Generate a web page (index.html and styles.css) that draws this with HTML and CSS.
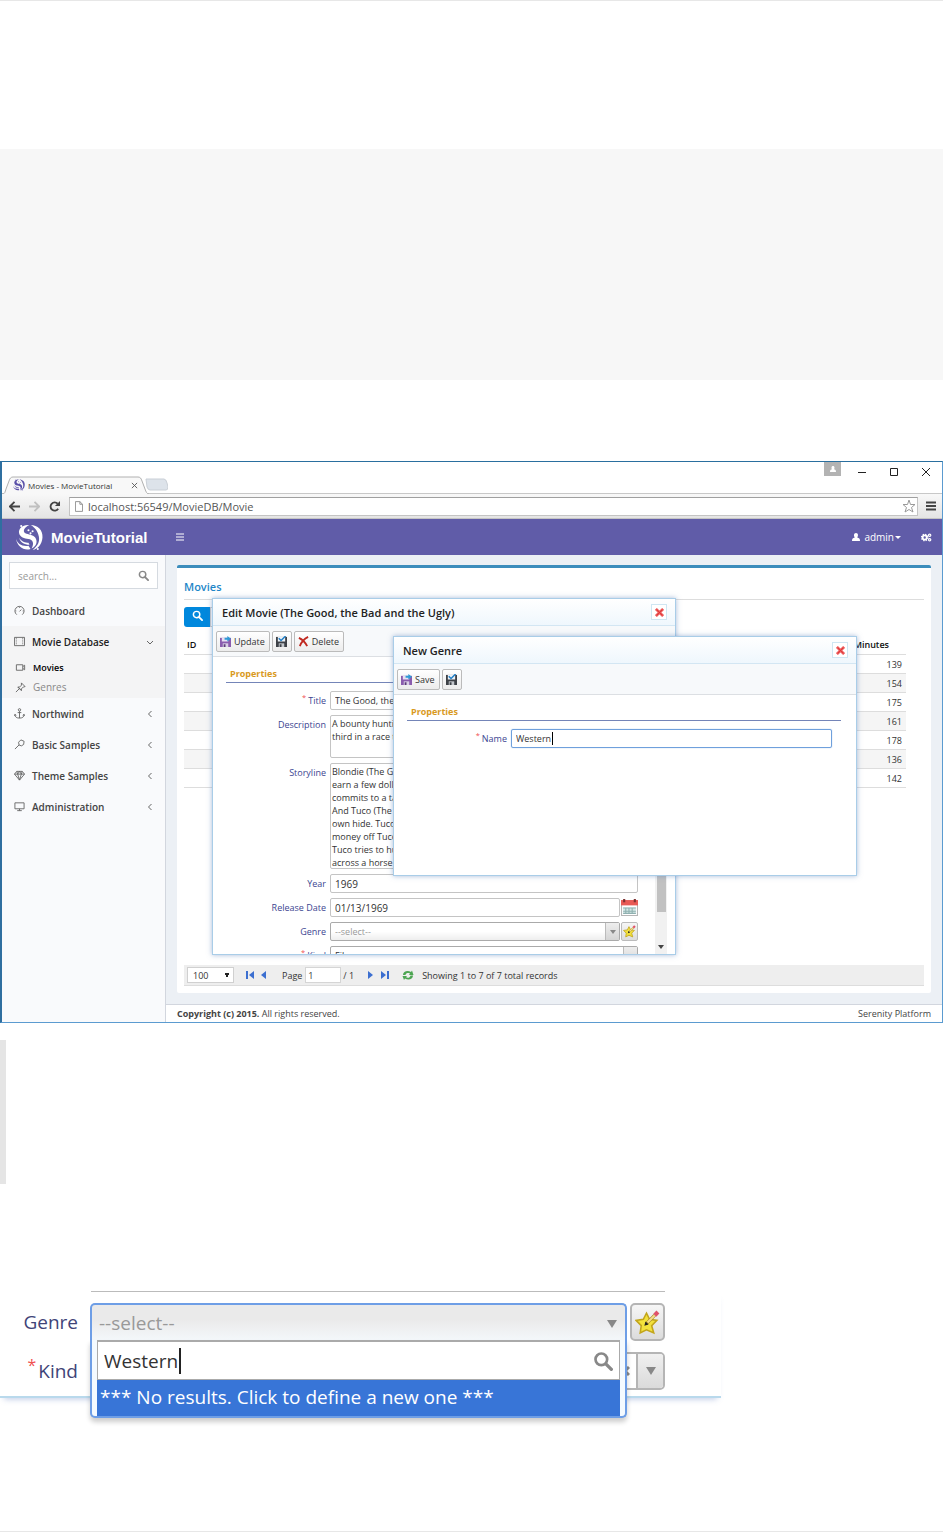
FILE: index.html
```
<!DOCTYPE html>
<html lang="en">

<head>
  <meta charset="UTF-8" />
  <meta name="viewport" content="width=device-width, initial-scale=1.0">
  <title>Movies - MovieTutorial</title>
  <link rel="stylesheet" href="styles.css">
</head>

<body>
  <!-- Shared icons -->
  <svg class="sprite" aria-hidden="true">
    <symbol id="swirl" viewBox="0 0 26 26">
      <path d="M13 1C7 0 2 4 3 9c1 4 5 5 9 5.500 4 .5 6 4 3 9 5-2 6-7 3.500-10.500C16 10 12 10.500 9 9 6 7 8 3 13 1z" />
      <path d="M14 1c7 0 12 5 11.500 12C25 20 21 24 16 25c5-4 7-8 6-13-1-5-4-9-8-11z" />
      <path d="M0 14c1 5 6 8 12 7l2 3C8 26 1 22 0 14z" />
      <path d="M3 13c2 4 6 5 9 5l1 2c-5 0-9-2-10-7z" />
      <circle cx="12" cy="6" r="1" />
      <circle cx="16" cy="7" r="1" />
      <circle cx="14" cy="9" r="1" />
      <circle cx="5" cy="2" r="1" />
      <circle cx="21" cy="24" r="1" />
    </symbol>
    <symbol id="disk-save" viewBox="0 0 12 12">
      <path fill="#8a5cae" d="M0 2h12v10H0z" />
      <path fill="#e6e0f2" d="M2 2h7v4H2z" />
      <path fill="#d9cfe6" d="M3 8h6v4H3z" />
      <path fill="#5b3c78" d="M4 9h2v3H4z" />
      <path fill="#2f9ad6" d="M5 2h3V0l4 3-4 3V4H5z" />
    </symbol>
    <symbol id="disk-check" viewBox="0 0 12 12">
      <path fill="#3d4147" d="M0 1h12v11H0z" />
      <path fill="#eef3f8" d="M2 1h8v5H2z" />
      <path fill="#c3c7cc" d="M3 8h6v4H3z" />
      <path fill="#3d4147" d="M4 9h2v3H4z" />
      <path fill="none" stroke="#2380c8" stroke-width="1.600" d="M3 2.500L5.500 5 10.500 0" />
    </symbol>
    <symbol id="red-x" viewBox="0 0 10 10">
      <path fill="none" stroke="#ee5a5a" stroke-width="3" d="M1 1l8 8M9 1L1 9" />
      <path fill="none" stroke="#d83a3a" stroke-width="1" d="M2 2l6 6M8 2L2 8" />
    </symbol>
    <symbol id="star" viewBox="0 0 24 24">
      <path fill="#f2e13c" stroke="#c2a51c" stroke-width="1.500" d="M11 3l3 6 7 1-5 5 2 7-7-3-6 3 1-7-5-5 7-1z" />
      <path fill="none" stroke="#a08820" stroke-width="3" d="M11 13l8-8" />
      <path fill="none" stroke="#f6dc8a" stroke-width="2" d="M12 12l7-7" />
      <path fill="none" stroke="#e0526a" stroke-width="4" d="M19 5l3-3" />
      <path fill="#222" d="M9 15l1-4 3 3z" />
    </symbol>
    <symbol id="magnifier" viewBox="0 0 12 12">
      <circle cx="5" cy="5" r="3.500" fill="none" stroke="currentColor" stroke-width="1.600" />
      <path d="M8 8l3 3" fill="none" stroke="currentColor" stroke-width="2" stroke-linecap="round" />
    </symbol>
    <symbol id="user" viewBox="0 0 10 10">
      <path fill="currentColor" d="M5 0c3 0 3 4 1.500 5.500C9 6 10 7 10 10H0c0-3 1-4 3.500-4.500C2 4 2 0 5 0z" />
    </symbol>
  </svg>

  <div class="page">
    <div class="code-block"></div>

    <!-- Browser window -->
    <div class="browser">
      <div class="titlebar">
        <div class="tab">
          <svg class="tab-shape" viewBox="0 0 166 18" preserveAspectRatio="none">
            <path fill="#dde3ea" stroke="#c9cfd6" d="M144 3h18q2 0 3 4l1 4q0 3-2 3h-16q-2 0-3-3z" />
            <path fill="#f8f8f8" stroke="#b0b0b0" d="M0 18c3 0 3-2 4-5l3-8c1-3 2-4 4-4h125c2 0 3 1 4 4l3 8c1 3 2 5 4 5" />
          </svg>
          <svg class="tab-icon"><use href="#swirl" /></svg>
          <span class="tab-title">Movies - MovieTutorial</span>
          <svg class="tab-close" viewBox="0 0 8 8"><path d="M1 1l6 6M7 1L1 7" /></svg>
        </div>
        <div class="window-buttons">
          <span class="profile"><svg><use href="#user" /></svg></span>
          <svg class="win" viewBox="0 0 10 10"><path d="M1 5.500h8" /></svg>
          <svg class="win" viewBox="0 0 10 10"><path d="M1.500 1.500h7v7h-7z" /></svg>
          <svg class="win" viewBox="0 0 10 10"><path d="M1 1l8 8M9 1L1 9" /></svg>
        </div>
      </div>
      <div class="browser-bar">
        <svg class="nav" viewBox="0 0 12 12"><path d="M12 6H2M6 1L1 6l5 5" /></svg>
        <svg class="nav disabled" viewBox="0 0 12 12"><path d="M0 6h10M6 1l5 5-5 5" /></svg>
        <svg class="nav" viewBox="0 0 12 12"><path d="M10 8.500A4.500 4.500 0 1 1 9.500 3" /><path class="solid" d="M12 0v5.500H6.500z" /></svg>
        <div class="address">
          <svg class="doc" viewBox="0 0 9 12"><path d="M.5.500h5l3 3v8h-8zM5.500.500v3h3" /></svg>
          <input type="text" aria-label="Address" value="localhost:56549/MovieDB/Movie">
          <svg class="bookmark" viewBox="0 0 14 14"><path d="M7 1l1.500 4.500H13l-3.500 3L11 13 7 10.500 3 13l1.500-4.500L1 5.500h4.500z" /></svg>
        </div>
        <svg class="menu" viewBox="0 0 10 10"><path d="M0 1.500h10M0 5h10M0 8.500h10" /></svg>
      </div>

      <div class="app">
        <header class="app-header">
          <a href="#" class="logo"><svg><use href="#swirl" /></svg>MovieTutorial</a>
          <button class="toggle" aria-label="Toggle navigation">
            <svg viewBox="0 0 8 8"><path d="M0 1h8M0 4h8M0 7h8" /></svg>
          </button>
          <a href="#" class="account"><svg class="person"><use href="#user" /></svg>admin<svg class="caret" viewBox="0 0 6 3"><path d="M0 0h6L3 3z" /></svg></a>
          <a href="#" class="settings" aria-label="Settings">
            <svg viewBox="0 0 12 10">
              <circle cx="4" cy="5" r="2.300" stroke-width="2" />
              <circle cx="4" cy="5" r="3.500" stroke-width="1.500" stroke-dasharray="1.500 1.250" />
              <circle cx="9.500" cy="2.500" r="1.300" stroke-width="1.300" />
              <circle cx="9.500" cy="7.500" r="1.300" stroke-width="1.300" />
            </svg>
          </a>
        </header>

        <div class="app-body">
          <aside class="sidebar">
            <div class="side-search">
              <input type="text" placeholder="search..." aria-label="Search menu">
              <svg><use href="#magnifier" /></svg>
            </div>
            <nav>
              <a href="#" class="item">
                <svg viewBox="0 0 12 12"><path d="M3 10.500A5 5 0 1 1 9 10.500M6 7l2-2M1.500 6.500h1M6 2v1M9.500 6.500h1" /></svg>Dashboard
              </a>
              <div class="group">
                <a href="#" class="item open">
                  <svg viewBox="0 0 12 12"><path d="M.5 1.500h11v9H.5z" /><path stroke-dasharray="1 1" d="M2.500 2v8M9.500 2v8" /></svg>Movie Database
                  <svg class="chev" viewBox="0 0 6 6"><path d="M0 2l3 3 3-3" /></svg>
                </a>
                <a href="#" class="subitem current">
                  <svg viewBox="0 0 12 12"><path d="M1.500 3h7v6h-7zM8.500 5l2-1.500v5L8.500 7" /></svg>Movies
                </a>
                <a href="#" class="subitem">
                  <svg viewBox="0 0 12 12"><path d="M7 1l4 4-2 .5-2 2 0 2-4-4h2l2-2zM5 7l-4 4M3.500 5.500l3 3" /></svg>Genres
                </a>
              </div>
              <a href="#" class="item">
                <svg viewBox="0 0 12 12"><circle cx="6" cy="2" r="1.300" /><path d="M6 3.500v7.500M4 5h4M1 7c0 3 2 4 5 4s5-1 5-4M.5 8.500L1 7l1.500 1M11.500 8.500L11 7 9.500 8" /></svg>Northwind
                <svg class="chev" viewBox="0 0 6 6"><path d="M4.500 0l-3 3 3 3" /></svg>
              </a>
              <a href="#" class="item">
                <svg viewBox="0 0 12 12"><path d="M1 11l4.500-4.500M5 3.500L7.500 1 11 2.500 10.500 6 8 7.500 5.500 6.500z" /></svg>Basic Samples
                <svg class="chev" viewBox="0 0 6 6"><path d="M4.500 0l-3 3 3 3" /></svg>
              </a>
              <a href="#" class="item">
                <svg viewBox="0 0 12 12"><path d="M3 1.500h6l2.500 3L6 11 .5 4.500zM.5 4.500h11M4 4.500L6 11l2-6.500M3 1.500l1 3 2-3 2 3 1-3" /></svg>Theme Samples
                <svg class="chev" viewBox="0 0 6 6"><path d="M4.500 0l-3 3 3 3" /></svg>
              </a>
              <a href="#" class="item">
                <svg viewBox="0 0 12 12"><path d="M1 2h10v6.500H1zM6 8.500v2M3.500 10.500h5" /></svg>Administration
                <svg class="chev" viewBox="0 0 6 6"><path d="M4.500 0l-3 3 3 3" /></svg>
              </a>
            </nav>
          </aside>

          <main class="main">
            <section class="panel">
              <h1>Movies</h1>
              <div class="quick-search">
                <button aria-label="Search"><svg><use href="#magnifier" /></svg></button>
                <input type="text" aria-label="Quick search">
              </div>
              <table class="grid">
                <thead>
                  <tr>
                    <th>ID</th>
                    <th class="num">Minutes</th>
                  </tr>
                </thead>
                <tbody>
                  <tr><td></td><td class="num">139</td></tr>
                  <tr><td></td><td class="num">154</td></tr>
                  <tr><td></td><td class="num">175</td></tr>
                  <tr><td></td><td class="num">161</td></tr>
                  <tr><td></td><td class="num">178</td></tr>
                  <tr><td></td><td class="num">136</td></tr>
                  <tr><td></td><td class="num">142</td></tr>
                </tbody>
              </table>
              <div class="pager">
                <select aria-label="Page size">
                  <option>100</option>
                </select>
                <button class="first" aria-label="First page"><svg viewBox="0 0 8 8"><path d="M0 0h2v8H0zM8 0v8L3 4z" /></svg></button>
                <button class="prev" aria-label="Previous page"><svg viewBox="0 0 8 8"><path d="M6 0v8L1 4z" /></svg></button>
                <label for="pageNo">Page</label>
                <input type="text" id="pageNo" value="1">
                <span>/ 1</span>
                <button class="next" aria-label="Next page"><svg viewBox="0 0 8 8"><path d="M2 0v8l5-4z" /></svg></button>
                <button class="last" aria-label="Last page"><svg viewBox="0 0 8 8"><path d="M6 0h2v8H6zM0 0v8l5-4z" /></svg></button>
                <button class="refresh" aria-label="Refresh"><svg viewBox="0 0 12 12"><path d="M1 6c0-4 5-5 8-3l1-1.500L11.500 6H7l1-1.500C6 3.500 4 4 3.500 6zM11 6.500c0 4-5 5-8 3L2 11 .5 7H5L4 8.300c2 1 4 .5 4.500-1.800z" /></svg></button>
                <span>Showing 1 to 7 of 7 total records</span>
              </div>
            </section>
            <footer class="footer">
              <span><b>Copyright (c) 2015.</b> All rights reserved.</span>
              <span>Serenity Platform</span>
            </footer>
          </main>
        </div>

        <!-- Edit movie dialog -->
        <div class="dialog edit-dialog" role="dialog" aria-labelledby="editTitle">
          <div class="dialog-title">
            <h2 id="editTitle">Edit Movie (The Good, the Bad and the Ugly)</h2>
            <button class="close" aria-label="Close"><svg><use href="#red-x" /></svg></button>
          </div>
          <div class="tools">
            <button><svg><use href="#disk-save" /></svg>Update</button>
            <button aria-label="Apply changes"><svg><use href="#disk-check" /></svg></button>
            <button><svg viewBox="0 0 12 12"><path fill="none" stroke="#c0281f" stroke-width="2" d="M1 2c4 2 7 5 9 9M11 1C7 3 4 6 2 11" /></svg>Delete</button>
          </div>
          <div class="dialog-body">
            <form class="fields">
              <h3>Properties</h3>
              <label for="title"><sup>*</sup>Title</label>
              <input type="text" id="title" value="The Good, the Bad and the Ugly">
              <label for="description">Description</label>
              <textarea id="description" class="short">A bounty hunting scam joins two men in an uneasy alliance
third in a race to find a fortune in gold buried in a cemetery.</textarea>
              <label for="storyline">Storyline</label>
              <textarea id="storyline" class="tall">Blondie (The Good) is a professional gunslinger who is out to
earn a few dollars. Angel Eyes (The Bad) is a hitman who
commits to a task and sees it through, if paid to do so.
And Tuco (The Ugly) is a wanted outlaw looking after his
own hide. Tuco and Blondie share a partnership making
money off Tuco's bounty, but when Blondie unties it,
Tuco tries to hunt him down. When they come
across a horse carriage they learn of hidden gold.</textarea>
              <label for="year">Year</label>
              <input type="text" id="year" class="digits" value="1969">
              <label for="release">Release Date</label>
              <div class="with-button">
                <input type="text" id="release" class="digits" value="01/13/1969">
                <button type="button" class="calendar" aria-label="Pick a date">
                  <svg viewBox="0 0 16 16">
                    <path fill="#fff" stroke="#b5b5b5" d="M.5 1.500h15v14H.5z" />
                    <path fill="#e85a55" d="M0 1h16v5H0z" />
                    <path fill="#7d3030" d="M2 0h2v3H2zM12 0h2v3h-2z" />
                    <path fill="#d5e8e6" d="M2 8h12v6H2z" />
                    <path fill="none" stroke="#8fb0b0" d="M2 8.500h12M2 11.500h12M4.500 8v6M7.500 8v6M10.500 8v6M2 13.500h12" />
                  </svg>
                </button>
              </div>
              <label for="genre">Genre</label>
              <div class="with-button">
                <div class="dropdown">
                  <select id="genre" class="empty">
                    <option>--select--</option>
                  </select>
                  <span class="arrow"></span>
                </div>
                <button type="button" class="star" aria-label="Define genre"><svg><use href="#star" /></svg></button>
              </div>
              <label for="kind"><sup>*</sup>Kind</label>
              <div class="dropdown">
                <select id="kind">
                  <option>Film</option>
                </select>
                <span class="arrow"></span>
              </div>
            </form>
            <div class="scrollbar">
              <div class="thumb"></div>
              <svg viewBox="0 0 6 4"><path d="M0 0h6L3 4z" /></svg>
            </div>
          </div>
        </div>

        <!-- New genre dialog -->
        <div class="dialog genre-dialog" role="dialog" aria-labelledby="genreTitle">
          <div class="dialog-title">
            <h2 id="genreTitle">New Genre</h2>
            <button class="close" aria-label="Close"><svg><use href="#red-x" /></svg></button>
          </div>
          <div class="tools">
            <button><svg><use href="#disk-save" /></svg>Save</button>
            <button aria-label="Apply changes"><svg><use href="#disk-check" /></svg></button>
          </div>
          <div class="dialog-body">
            <form class="fields">
              <h3>Properties</h3>
              <label for="name"><sup>*</sup>Name</label>
              <div class="focused">
                <input type="text" id="name" value="Western">
                <i class="cursor"></i>
              </div>
            </form>
          </div>
        </div>
      </div>
    </div>

    <div class="quote"></div>

    <!-- Close-up of the genre editor -->
    <div class="closeup">
      <div class="previous-field"></div>
      <label for="genreBig">Genre</label>
      <div class="picker">
        <select id="genreBig">
          <option>--select--</option>
        </select>
        <i class="big-arrow"></i>
        <div class="picker-drop">
          <div class="picker-search">
            <input type="text" value="Western" aria-label="Search genres">
            <i class="cursor"></i>
            <svg><use href="#magnifier" /></svg>
          </div>
          <div class="no-results">*** No results. Click to define a new one ***</div>
        </div>
      </div>
      <button class="star" aria-label="Define genre"><svg><use href="#star" /></svg></button>
      <label for="kindBig"><sup>*</sup>Kind</label>
      <div class="kind-box">
        <input type="text" id="kindBig">
        <svg class="clear" viewBox="0 0 10 10"><path d="M1 1l8 8M9 1L1 9" /></svg>
        <button aria-label="Open list"><i class="big-arrow"></i></button>
      </div>
    </div>
  </div>
</body>

</html>
```
FILE: styles.css
```
* {
  box-sizing: border-box;
}

body {
  margin: 0;
  background-color: #fff;
  font-family: 'Open Sans', 'Noto Sans', sans-serif;
  font-size: 9px;
  color: #333;
}

h1,
h2,
h3 {
  margin: 0;
}

a {
  color: inherit;
  text-decoration: none;
}

button,
input,
select,
textarea {
  font: inherit;
  color: inherit;
  margin: 0;
  padding: 0;
  border: none;
  background: none;
  outline: none;
}

button {
  cursor: pointer;
}

select {
  appearance: none;
}

svg {
  flex: none;
}

.sprite {
  position: absolute;
  width: 0;
  height: 0;
}

.page {
  border-top: 1px solid #e7e7e7;
  border-bottom: 1px solid #e7e7e7;
  padding: 148px 0 133px;
}

.code-block {
  height: 231px;
  background-color: #f7f7f7;
  margin-bottom: 81px;
}

.quote {
  height: 144px;
  margin: 17px 0 107px;
  border-left: 6px solid #e5e5e5;
}

/* Browser window */
.browser {
  border: 1px solid #5b9bd0;
  border-top-color: #2a6f9f;
  border-left: 2px solid #2f6fa0;
}

.titlebar {
  display: flex;
  justify-content: space-between;
  align-items: flex-end;
  height: 32px;
  border-bottom: 1px solid #c8c8c8;
}

.tab {
  position: relative;
  display: flex;
  align-items: center;
  width: 166px;
  height: 18px;
  padding-left: 11px;
  margin-bottom: -1px;
  font-size: 8px;
}

.tab-shape {
  position: absolute;
  left: 0;
  top: 0;
  width: 100%;
  height: 100%;
}

.tab-icon {
  position: relative;
  width: 12px;
  height: 12px;
  margin-right: 3px;
  fill: #5a50a8;
}

.tab-title {
  position: relative;
  width: 103px;
}

.tab-close {
  position: relative;
  width: 7px;
  height: 7px;
  stroke: #555;
}

.window-buttons {
  display: flex;
  align-items: center;
  gap: 22px;
  align-self: flex-start;
  height: 20px;
  padding-right: 11px;
}

.profile {
  width: 17px;
  height: 14px;
  margin-right: -6px;
  align-self: flex-start;
  background-color: #b3b3b3;
  color: #fff;
  display: flex;
  align-items: center;
  justify-content: center;
}

.profile svg {
  width: 6px;
  height: 6px;
}

.win {
  width: 10px;
  height: 10px;
  fill: none;
  stroke: #222;
}

.browser-bar {
  display: flex;
  align-items: center;
  height: 25px;
  padding: 0 6px 0 7px;
  background: linear-gradient(#f8f8f8, #e4e4e4);
  border-bottom: 1px solid #c4c4c4;
}

.nav {
  width: 11px;
  height: 11px;
  margin-right: 9px;
  fill: none;
  stroke: #444;
  stroke-width: 2;
}

.nav.disabled {
  stroke: #c0c0c0;
}

.nav .solid {
  fill: #444;
  stroke: none;
}

.address {
  flex: 1;
  display: flex;
  align-items: center;
  height: 19px;
  padding: 0 1px 0 5px;
  margin-right: 8px;
  border: 1px solid #c4c4c4;
  border-top-color: #a0a0a0;
  background-color: #fff;
}

.address input {
  flex: 1;
  font-size: 11px;
  color: #555;
}

.doc {
  width: 8px;
  height: 11px;
  margin-right: 5px;
  fill: none;
  stroke: #8a8a8a;
}

.bookmark {
  width: 14px;
  height: 14px;
  fill: none;
  stroke: #9a9a9a;
}

.menu {
  width: 10px;
  height: 10px;
  stroke: #444;
  stroke-width: 2;
}

/* Application */
.app {
  position: relative;
}

.app-header {
  display: flex;
  align-items: center;
  height: 36px;
  padding-right: 10px;
  background-color: #605ca8;
  color: #fff;
  font-size: 10px;
}

.logo {
  display: flex;
  align-items: center;
  width: 174px;
  padding-left: 14px;
  gap: 8px;
  font-family: 'Liberation Sans', Arial, sans-serif;
  font-size: 15px;
  font-weight: bold;
}

.logo svg {
  width: 27px;
  height: 27px;
  fill: #fff;
}

.toggle {
  display: flex;
}

.toggle svg {
  width: 8px;
  height: 8px;
  stroke: #fff;
}

.account {
  display: flex;
  align-items: center;
  margin-left: auto;
  margin-right: 20px;
}

.person {
  width: 8px;
  height: 8px;
  margin-right: 4px;
}

.caret {
  width: 6px;
  height: 3px;
  margin-left: 1px;
  fill: #fff;
}

.settings {
  display: flex;
}

.settings svg {
  width: 11px;
  height: 9px;
  fill: none;
  stroke: #fff;
}

.app-body {
  display: flex;
  height: 467px;
}

.sidebar {
  width: 164px;
  padding-top: 7px;
  background-color: #f9fafc;
  border-right: 1px solid #d2d6de;
  font-size: 10px;
  font-weight: 600;
}

.side-search {
  display: flex;
  align-items: center;
  height: 27px;
  margin: 0 7px 6px;
  padding: 0 8px;
  border: 1px solid #d5dae0;
  background-color: #fff;
  color: #888;
}

.side-search input {
  flex: 1;
  min-width: 0;
  font-weight: normal;
}

.side-search input::placeholder {
  color: #999;
}

.side-search svg {
  width: 11px;
  height: 11px;
}

.item,
.subitem {
  display: flex;
  align-items: center;
  color: #444;
}

.item {
  height: 31px;
  padding: 0 12px;
}

.subitem {
  height: 20px;
  padding: 0 13px;
  color: #888;
  font-weight: normal;
}

.item svg,
.subitem svg {
  width: 11px;
  height: 11px;
  margin-right: 7px;
  fill: none;
  stroke: #666;
  stroke-width: 1;
}

.item .chev {
  width: 6px;
  height: 6px;
  margin: 0 0 0 auto;
}

.group {
  padding-bottom: 1px;
  background-color: #f4f4f5;
}

.open {
  color: #222;
}

.current {
  color: #000;
  font-size: 9px;
  font-weight: 600;
}

.main {
  flex: 1;
  display: flex;
  flex-direction: column;
  background-color: #ecf0f5;
}

.panel {
  flex: 1;
  display: flex;
  flex-direction: column;
  margin: 10px 11px 11px;
  padding: 10px 7px 7px;
  background-color: #fff;
  border-top: 3px solid #3c8dbc;
  border-radius: 2px;
}

.panel h1 {
  height: 22px;
  border-bottom: 1px solid #ddd;
  font-size: 11px;
  font-weight: 600;
  line-height: 18px;
  color: #1e86c8;
}

.quick-search {
  display: flex;
  height: 20px;
  margin: 7px 0;
}

.quick-search button {
  width: 26px;
  border-radius: 3px 0 0 3px;
  background-color: #0088dd;
  color: #fff;
}

.quick-search svg {
  width: 11px;
  height: 11px;
}

.quick-search input {
  width: 140px;
  border: 1px solid #ccc;
}

.grid {
  width: calc(100% - 18px);
  border-collapse: separate;
  border-spacing: 0;
  table-layout: fixed;
}

.grid th,
.grid td {
  height: 19px;
  padding: 0 4px 0 3px;
  border-bottom: 1px solid #ddd;
  text-align: left;
}

.grid th {
  height: 21px;
  font-weight: 600;
  color: #111;
}

.grid .num {
  text-align: right;
}

.grid th.num {
  padding-right: 17px;
}

.grid tbody tr:nth-child(even) td {
  background-color: #f5f5f5;
}

.pager {
  display: flex;
  align-items: center;
  height: 21px;
  margin-top: auto;
  padding-left: 3px;
  background-color: #eee;
  border-bottom: 1px solid #ddd;
}

.pager select {
  width: 47px;
  height: 16px;
  padding-left: 5px;
  border: 1px solid #d0d0d0;
  background: linear-gradient(#222, #222) 37px 5px / 4px 2px no-repeat, linear-gradient(#222, #222) 38px 7px / 2px 2px no-repeat, #fff;
}

.pager button {
  display: flex;
  fill: #3c6fd0;
}

.pager button svg {
  width: 8px;
  height: 8px;
}

.first {
  margin-left: 12px;
}

.prev {
  margin: 0 14px 0 6px;
}

.pager input {
  width: 36px;
  height: 16px;
  margin: 0 2px 0 3px;
  padding-left: 2px;
  border: 1px solid #d5d5d5;
  background-color: #fff;
}

.next {
  margin: 0 7px 0 12px;
}

.last {
  margin-right: 13px;
}

.pager .refresh {
  margin-right: 8px;
  fill: #4da552;
}

.pager .refresh svg {
  width: 12px;
  height: 12px;
}

.footer {
  display: flex;
  justify-content: space-between;
  align-items: center;
  height: 18px;
  padding: 0 11px;
  background-color: #fff;
  border-top: 1px solid #d2d6de;
  color: #444;
}

/* Dialogs */
.dialog {
  position: absolute;
  display: flex;
  flex-direction: column;
  width: 464px;
  background-color: #fff;
  border: 1px solid #a9cde8;
  box-shadow: 0 0 5px rgba(80, 120, 180, 0.5);
}

.edit-dialog {
  left: 210px;
  top: 79px;
  height: 357px;
}

.genre-dialog {
  left: 391px;
  top: 117px;
  height: 240px;
}

.dialog-title {
  display: flex;
  justify-content: space-between;
  align-items: center;
  height: 27px;
  padding: 0 8px 0 9px;
  border-bottom: 1px solid #d3e6f3;
  background: linear-gradient(#fff, #eff7fd);
}

.dialog-title h2 {
  font-size: 11px;
  font-weight: 600;
  color: #222;
}

.close {
  display: flex;
  align-items: center;
  justify-content: center;
  width: 16px;
  height: 16px;
  border: 1px solid #cfe6f2;
  background-color: #fff;
}

.close svg {
  width: 9px;
  height: 9px;
}

.tools {
  display: flex;
  align-items: center;
  gap: 2px;
  height: 31px;
  padding: 0 3px;
  background-color: #f7f9fb;
  border-bottom: 1px solid #dcdfe3;
}

.tools button {
  display: flex;
  align-items: center;
  gap: 3px;
  height: 21px;
  padding: 0 4px 0 3px;
  border: 1px solid #bbb;
  border-radius: 2px;
  background: linear-gradient(#fff, #ececec);
}

.tools svg {
  width: 11px;
  height: 11px;
}

.dialog-body {
  flex: 1;
  display: flex;
  min-height: 0;
  overflow: hidden;
}

.fields {
  flex: 1;
  display: grid;
  grid-template-columns: 100px 1fr;
  column-gap: 4px;
  row-gap: 5px;
  align-content: start;
  padding: 9px 17px 0 13px;
}

.fields h3 {
  grid-column: 1 / 3;
  height: 17px;
  margin: 0 -3px 3px 0;
  padding-left: 4px;
  border-bottom: 1px solid #7485b8;
  font-size: 9px;
  line-height: 16px;
  color: #d99a1e;
}

.genre-dialog .fields {
  padding-right: 24px;
}

.genre-dialog h3 {
  margin-right: -9px;
}

.fields label {
  padding-top: 3px;
  text-align: right;
  color: #3c4591;
}

sup {
  margin-right: 2px;
  line-height: 0;
  color: #f05050;
}

.fields input,
.fields textarea,
.dropdown select {
  display: block;
  width: 100%;
  height: 19px;
  padding: 0 4px;
  border: 1px solid #c4c4c4;
  border-radius: 2px;
}

.fields .digits {
  font-size: 10px;
}

.fields textarea {
  padding: 1px 0 0 1px;
  line-height: 13px;
  white-space: pre;
  overflow: hidden;
  resize: none;
}

.fields .short {
  height: 43px;
}

.fields .tall {
  height: 106px;
}

.with-button {
  display: flex;
  gap: 1px;
}

.fields .calendar {
  width: 17px;
  height: 19px;
}

.calendar svg {
  display: block;
  width: 17px;
  height: 17px;
}

.star {
  display: flex;
  align-items: center;
  justify-content: center;
  width: 17px;
  height: 19px;
  border: 1px solid #bbb;
  border-radius: 2px;
  background: linear-gradient(#f6f6f6, #dcdcdc);
}

.star svg {
  width: 13px;
  height: 13px;
}

.dropdown {
  position: relative;
  flex: 1;
}

.dropdown select {
  border-color: #aaa;
  background: linear-gradient(#fff 50%, #eee);
}

.dropdown .empty {
  color: #999;
}

.arrow {
  position: absolute;
  top: 1px;
  right: 1px;
  width: 14px;
  height: 17px;
  border-left: 1px solid #bbb;
  background: linear-gradient(#eee, #d4d4d4);
  pointer-events: none;
}

.arrow::after {
  content: '';
  position: absolute;
  top: 7px;
  left: 4px;
  border: 3px solid transparent;
  border-top: 4px solid #888;
  border-bottom: none;
}

.focused {
  position: relative;
}

.focused input {
  border-color: #6fa0dc;
  box-shadow: 0 0 1px #6fa0dc;
}

.focused .cursor {
  position: absolute;
  left: 41px;
  top: 3px;
  width: 1px;
  height: 13px;
  background-color: #000;
}

.scrollbar {
  display: flex;
  flex-direction: column;
  align-items: center;
  justify-content: space-between;
  width: 12px;
  margin-right: 8px;
  padding-bottom: 5px;
  background-color: #f1f1f1;
}

.thumb {
  width: 9px;
  height: 255px;
  background-color: #c1c1c1;
}

.scrollbar svg {
  width: 6px;
  height: 4px;
  fill: #444;
}

/* Close-up */
.closeup {
  display: grid;
  grid-template-columns: 78px 546px 35px;
  column-gap: 3px;
  row-gap: 11px;
  width: 721px;
  max-width: 100%;
  padding-bottom: 6px;
  border-bottom: 2px solid #b9d9ec;
  box-shadow: 0 5px 6px -4px rgba(90, 120, 190, 0.4);
  font-size: 19px;
}

.closeup label {
  align-self: center;
  text-align: right;
  color: #3f4478;
}

.previous-field {
  grid-column: 2 / 4;
  height: 1px;
  margin-left: 10px;
  background-color: #bbb;
}

.closeup .picker,
.closeup .kind-box {
  margin-left: 9px;
}

.picker {
  position: relative;
  z-index: 1;
  height: 38px;
}

.picker select {
  width: 100%;
  height: 38px;
  padding: 0 7px;
  border: 2px solid #6e9ee6;
  border-bottom: none;
  border-radius: 5px 5px 0 0;
  background: linear-gradient(#eaeaea 40%, #f4f8fb);
  color: #999;
}

.big-arrow {
  border: 5px solid transparent;
  border-top: 8px solid #888;
  border-bottom: none;
}

.picker > .big-arrow {
  position: absolute;
  right: 10px;
  top: 17px;
}

.picker-drop {
  position: absolute;
  top: 37px;
  left: 0;
  right: 0;
  padding: 0 5px;
  border: 2px solid #6e9ee6;
  border-top: none;
  border-radius: 0 0 5px 5px;
  background-color: #f4faff;
  box-shadow: 0 4px 5px rgba(0, 0, 0, 0.2);
}

.picker-search {
  display: flex;
  align-items: center;
  height: 40px;
  padding: 0 6px;
  border: 1px solid #aaa;
  border-top-width: 2px;
  background-color: #fff;
}

.picker-search input {
  width: 75px;
}

.picker-search .cursor {
  width: 2px;
  height: 26px;
  background-color: #222;
}

.picker-search svg {
  width: 20px;
  height: 20px;
  margin-left: auto;
  color: #888;
}

.no-results {
  height: 36px;
  padding-left: 3px;
  background-color: #3875d7;
  color: #fff;
  line-height: 35px;
}

.closeup .star {
  width: 35px;
  height: 38px;
  border: 2px solid #b5b5b5;
  border-radius: 5px;
}

.closeup .star svg {
  width: 25px;
  height: 25px;
}

.kind-box {
  grid-column: 2 / 4;
  display: flex;
  align-items: center;
  height: 38px;
  border: 2px solid #b5b5b5;
  border-radius: 5px;
  overflow: hidden;
}

.kind-box input {
  flex: 1;
}

.clear {
  width: 10px;
  height: 10px;
  margin-right: 6px;
  stroke: #888;
  stroke-width: 3;
}

.kind-box button {
  display: flex;
  align-items: center;
  justify-content: center;
  width: 27px;
  height: 34px;
  border-left: 2px solid #b5b5b5;
  background: linear-gradient(#f0f0f0, #dadada);
}
```
